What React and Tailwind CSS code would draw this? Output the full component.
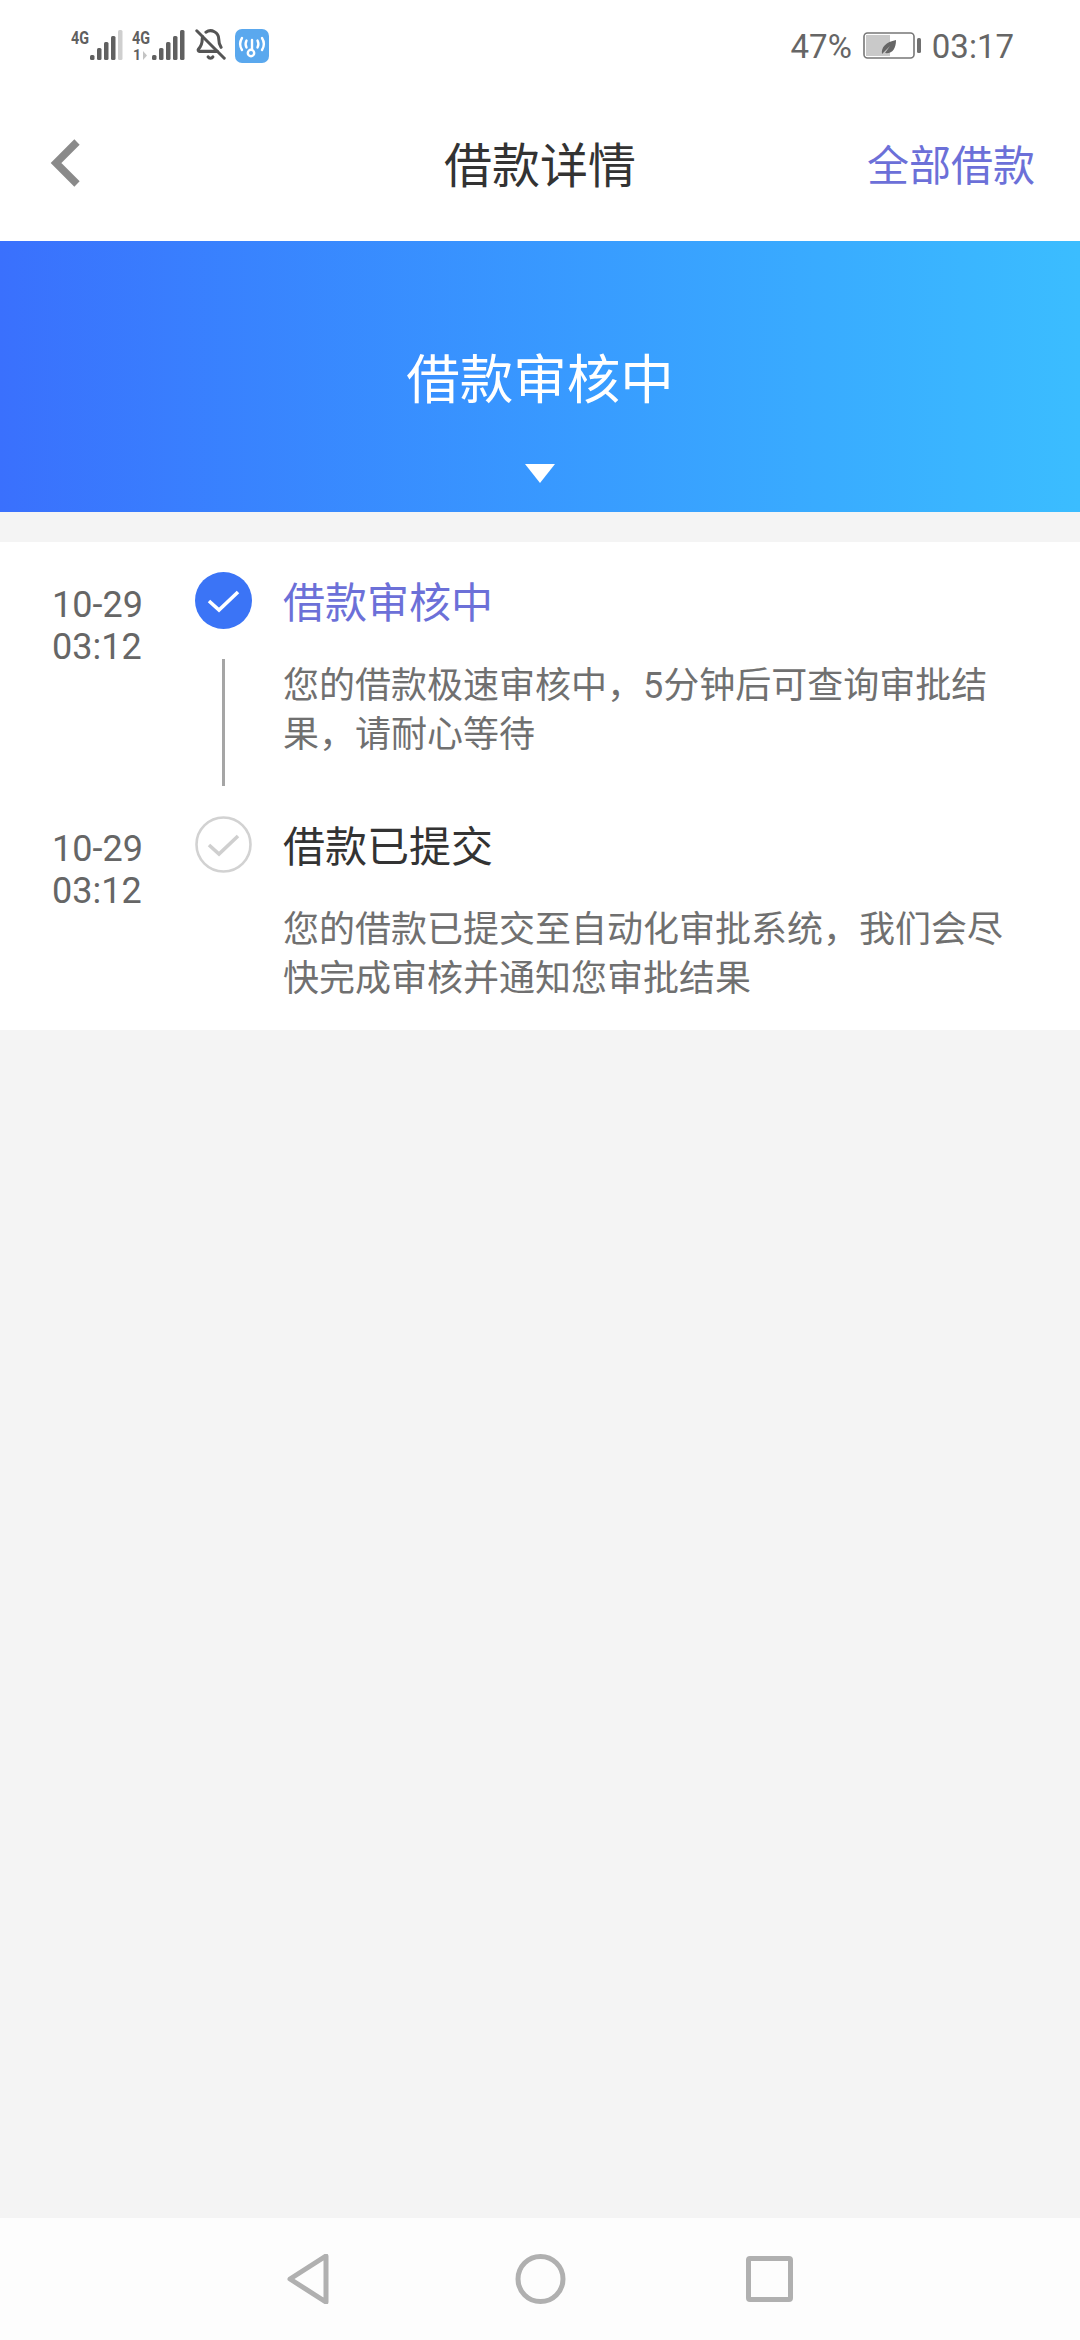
import { BellOff } from "lucide-react";

const FONT = "font-['Roboto','Noto_Sans_CJK_SC',sans-serif]";

// Signal strength bars, the last one can be dimmed
function Signal({ x, dimLast }) {
  const tops = [55, 48, 42, 36, 30];
  return tops.map((top, i) => (
    <rect
      key={i}
      x={x + i * 7}
      y={top}
      width="4.5"
      height={60 - top}
      rx="1.5"
      fill={dimLast && i === 4 ? "#cfcfcf" : "#606060"}
    />
  ));
}

function SignalIcons() {
  return (
    <svg width="116" height="64" viewBox="70 0 116 64">
      <text x="71" y="44" fontSize="18" fontWeight="700" fill="#606060" fontFamily="Roboto, sans-serif" textLength="18" lengthAdjust="spacingAndGlyphs">
        4G
      </text>
      <Signal x={90} dimLast />
      <text x="132" y="44" fontSize="18" fontWeight="700" fill="#606060" fontFamily="Roboto, sans-serif" textLength="18" lengthAdjust="spacingAndGlyphs">
        4G
      </text>
      <text x="133" y="60" fontSize="14" fontWeight="700" fill="#606060" fontFamily="Roboto, sans-serif">
        1
      </text>
      <path d="M143 51v9l4-4.5z" fill="#c4c4c4" />
      <Signal x={152} />
    </svg>
  );
}

function WifiApp() {
  return (
    <svg width="34" height="34" viewBox="0 0 34 34">
      <rect width="34" height="34" rx="7" fill="#5aa8ee" />
      <g fill="none" stroke="#fff" strokeWidth="2.4" strokeLinecap="round">
        <path d="M7 9c-2.5 4-2.5 8 0 12" />
        <path d="M11.5 11.5c-1.3 2.5-1.3 4.5 0 7" />
        <path d="M27 9c2.5 4 2.5 8 0 12" />
        <path d="M22.5 11.5c1.3 2.5 1.3 4.5 0 7" />
        <path d="M17 11v9" />
        <circle cx="16" cy="24" r="3.2" />
      </g>
    </svg>
  );
}

function Battery() {
  return (
    <svg width="58" height="28" viewBox="0 0 58 28">
      <rect x="1" y="1" width="50" height="25" rx="3.5" fill="#fff" stroke="#777" strokeWidth="1.6" />
      <rect x="3" y="3" width="24" height="21" fill="#c9c9c9" />
      <rect x="54" y="6" width="4" height="15" rx="1.5" fill="#707070" />
      <path d="M19 22c-1-7 4-12 14-14 0 9-4 14-11 13l5-7-8 8z" fill="#666" />
    </svg>
  );
}

function StatusBar() {
  return (
    <div className="h-[90px] flex justify-between pl-[70px] pr-[66px] text-[#666] text-[33px]">
      <div className="flex items-start">
        <SignalIcons />
        <BellOff size={33} color="#555" strokeWidth={2.2} className="mt-[28px] ml-[8px]" />
        <div className="mt-[29px] ml-[8px]">
          <WifiApp />
        </div>
      </div>
      <div className="flex items-start pt-[27px]">
        <span className="leading-[40px]">47%</span>
        <div className="ml-[11px] mt-[5px]">
          <Battery />
        </div>
        <span className="leading-[40px] ml-[11px]">03:17</span>
      </div>
    </div>
  );
}

function Header() {
  return (
    <div className="h-[151px] grid grid-cols-[1fr_auto_1fr] items-center">
      <div className="pl-[50px] pb-[6px]">
        <svg width="32" height="50" viewBox="0 0 32 50" className="block">
          <path d="M27 4L6 25l21 21" fill="none" stroke="#8a8a8a" strokeWidth="7.5" />
        </svg>
      </div>
      <div className="text-[48px] leading-[60px] pt-[2px] text-[#333]">借款详情</div>
      <div className="text-right pr-[45px] text-[42px] leading-[60px] pt-[2px] text-[#6c70d8]">全部借款</div>
    </div>
  );
}

function Banner() {
  return (
    <div className="h-[271px] bg-gradient-to-r from-[#3a70fd] to-[#3bbdff] flex flex-col items-center">
      <div className="mt-[105px] text-[53.5px] leading-[70px] text-white">借款审核中</div>
      <svg width="30" height="19" viewBox="0 0 30 19" className="mt-[48px]">
        <path d="M0 0h30L15 19z" fill="#fff" />
      </svg>
    </div>
  );
}

function TimelineRow({ title, text, active, last }) {
  return (
    <div className={`flex ${last ? "" : "h-[244px]"}`}>
      <div className="w-[195px] pl-[52px] pt-[12px] text-[36px] leading-[42px] text-[#666]">
        <div>10-29</div>
        <div>03:12</div>
      </div>
      <div className="w-[57px] flex flex-col items-center">
        {active ? (
          <svg width="57" height="57" viewBox="0 0 57 57" className="block">
            <circle cx="28.5" cy="28.5" r="28.5" fill="#3b74f6" />
            <path d="M14 29l10 9 19-18" fill="none" stroke="#fff" strokeWidth="3.6" />
          </svg>
        ) : (
          <svg width="57" height="57" viewBox="0 0 57 57" className="block">
            <circle cx="28.5" cy="28.5" r="27" fill="#fff" stroke="#d2d2d2" strokeWidth="2.6" />
            <path d="M14 29l10 9 19-18" fill="none" stroke="#cfcfcf" strokeWidth="3.6" />
          </svg>
        )}
        {!last && <div className="w-[3px] h-[127px] mt-[30px] bg-[#a5a5a5]" />}
      </div>
      <div className="ml-[31px] w-[730px] pt-[2px]">
        <div className={`text-[42px] leading-[60px] ${active ? "text-[#6c70d8]" : "text-[#333]"}`}>{title}</div>
        <p className="mt-[28px] text-[36px] leading-[49px] text-[#707070]">{text}</p>
      </div>
    </div>
  );
}

export default function App() {
  return (
    <div className={`w-[1080px] h-[2340px] flex flex-col bg-[#f4f4f4] overflow-hidden ${FONT}`}>
      <div className="bg-white">
        <StatusBar />
        <Header />
      </div>
      <Banner />

      {/* Timeline */}
      <div className="mt-[30px] bg-white pt-[30px] pb-[26px]">
        <TimelineRow
          active
          title="借款审核中"
          text="您的借款极速审核中，5分钟后可查询审批结果，请耐心等待"
        />
        <TimelineRow
          last
          title="借款已提交"
          text="您的借款已提交至自动化审批系统，我们会尽快完成审核并通知您审批结果"
        />
      </div>

      {/* Android nav bar */}
      <div className="mt-auto h-[122px] bg-[#fdfdfd] flex items-start pt-[36px]">
        <svg width="1080" height="50" viewBox="0 0 1080 50" className="block">
          <g fill="none" stroke="#b0b0b0" strokeWidth="5" strokeLinejoin="round">
            <path d="M290 25L326 2v46z" />
            <circle cx="540.5" cy="25" r="22.5" />
            <rect x="748.5" y="4.5" width="42" height="41" rx="1.5" />
          </g>
        </svg>
      </div>
    </div>
  );
}
